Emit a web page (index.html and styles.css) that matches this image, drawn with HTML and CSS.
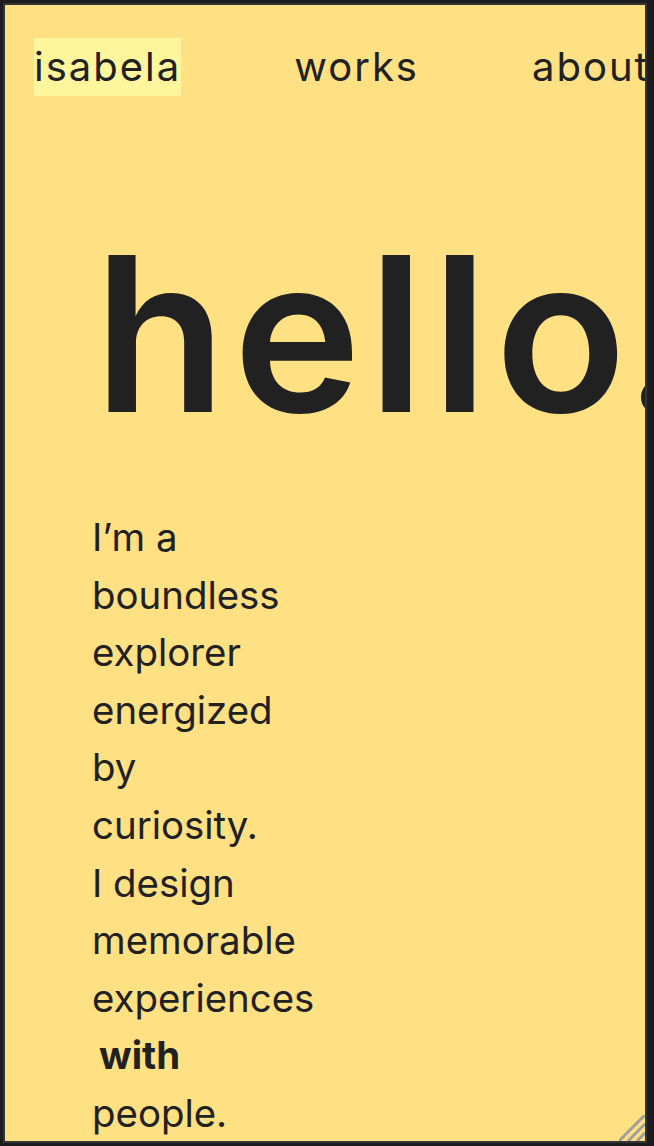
FILE: index.html
```html
<!DOCTYPE html>
<html lang="en">
<head>
<meta charset="utf-8">
<title>isabela</title>
<link rel="stylesheet" href="styles.css">
</head>
<body>
<div class="frame">
  <nav class="nav">
    <a class="nav-item is-active" href="#">isabela</a>
    <a class="nav-item" href="#">works</a>
    <a class="nav-item" href="#">about</a>
  </nav>
  <main class="hero">
    <h1 class="hello">hello<span class="dot">.</span></h1>
    <p class="intro">I’m a<br>boundless<br>explorer<br>energized<br>by<br>curiosity.<br>I design<br>memorable<br>experiences<br><strong class="em">with</strong><br>people.</p>
  </main>
  <svg class="grip" width="26" height="26" viewBox="0 0 26 26" aria-hidden="true">
    <line x1="0" y1="26" x2="26" y2="0"/>
    <line x1="9" y1="26" x2="26" y2="9"/>
    <line x1="18" y1="26" x2="26" y2="18"/>
  </svg>
</div>
</body>
</html>
```
FILE: styles.css
```css
html, body {
  margin: 0;
  padding: 0;
}
body {
  background: #1d1d1f;
  padding: 3px 7px 3px 3px;
  width: 654px;
  height: 1146px;
  box-sizing: border-box;
  overflow: hidden;
}
.frame {
  position: relative;
  box-sizing: border-box;
  width: 644px;
  height: 1140px;
  border: 2px solid #333436;
  background: #ffe082;
  overflow: hidden;
  color: #212121;
  font-family: Inter, "Noto Sans", sans-serif;
}
.nav {
  display: flex;
  gap: 113px;
  padding: 33px 0 0 29px;
  white-space: nowrap;
}
.nav-item {
  font-size: 40px;
  line-height: 58px;
  letter-spacing: 2px;
  color: #212121;
  text-decoration: none;
  flex: none;
}
.nav-item.is-active {
  background: #fff59d;
}
.hero {
  padding-left: 87px;
}
.hello {
  margin: 130px 0 0 2px;
  font-size: 216px;
  line-height: 216px;
  font-weight: 600;
  white-space: nowrap;
  letter-spacing: 7px;
}
.dot {
  margin-left: -10px;
}
.intro {
  margin: 67px 0 0 0;
  font-size: 38.4px;
  line-height: 57.6px;
}
.em {
  display: inline-block;
  margin-left: 7px;
  font-weight: 700;
}
.grip {
  position: absolute;
  right: 0;
  bottom: 0;
  stroke: #9e9e9e;
  stroke-width: 3;
}
```
